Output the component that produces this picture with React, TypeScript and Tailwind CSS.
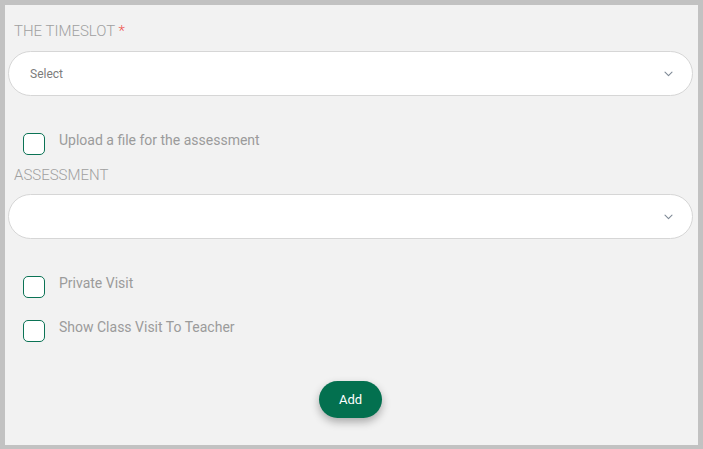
const Chevron = () => (
  <svg width="9" height="6" viewBox="0 0 9 6" fill="none" className="shrink-0">
    <path d="M1 1.2l3.5 3.4L8 1.2" stroke="#7f8a96" strokeWidth="1.1" strokeLinecap="round" strokeLinejoin="round" />
  </svg>
);

const SelectBox = ({ placeholder }: { placeholder?: string }) => (
  <div className="flex items-center justify-between h-[45px] w-[685px] bg-white border border-[#d6d6d6] rounded-full pl-[21px] pr-[19px]">
    <span className="text-[12px] text-[#7c7c7c]">{placeholder}</span>
    <Chevron />
  </div>
);

const CheckRow = ({ label, className }: { label: string; className?: string }) => (
  <div className={"flex items-start ml-[15px] " + (className ?? "")}>
    <span className="w-[22px] h-[22px] rounded-[5px] border-[1.5px] border-[#0b7355] bg-white shrink-0" />
    <span className="ml-[14px] -mt-[3px] text-[14px] leading-5 text-[#9b9b9b]">{label}</span>
  </div>
);

export default function App() {
  return (
    <div
      className="w-[703px] h-[449px] border-[5px] border-b-4 border-[#c2c2c2] bg-[#f2f2f2] pl-[3px]"
      style={{ fontFamily: "Roboto, 'Liberation Sans', sans-serif" }}
    >
      <div className="mt-[16px] ml-[6px] text-[15px] leading-5 font-light text-[#a0a0a0] uppercase">
        The Timeslot <span className="text-[#ef5350]">*</span>
      </div>
      <div className="mt-[10px]">
        <SelectBox placeholder="Select" />
      </div>

      <CheckRow label="Upload a file for the assessment" className="mt-[37px]" />

      <div className="mt-[10px] ml-[6px] text-[15px] leading-5 font-light text-[#a0a0a0] uppercase">
        Assessment
      </div>
      <div className="mt-[9px]">
        <SelectBox />
      </div>

      <CheckRow label="Private Visit" className="mt-[37px]" />
      <CheckRow label="Show Class Visit To Teacher" className="mt-[22px]" />

      <div className="flex justify-center mt-[39px] pr-[5px]">
        <button className="h-[37px] w-[63px] rounded-full bg-[#03704f] text-white text-[13px] font-normal shadow-[0_4px_8px_rgba(0,0,0,0.3)]">
          Add
        </button>
      </div>
    </div>
  );
}
